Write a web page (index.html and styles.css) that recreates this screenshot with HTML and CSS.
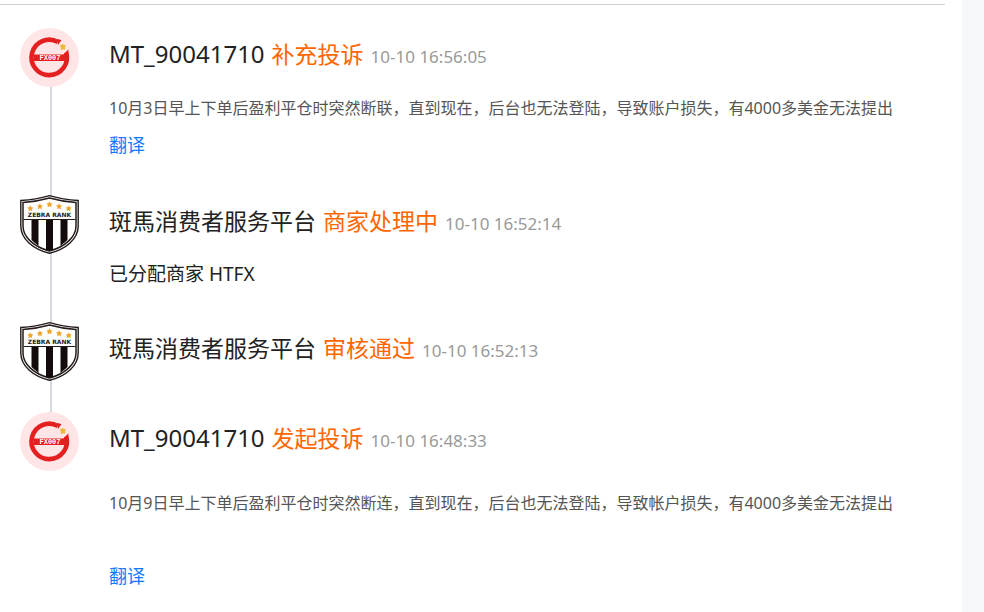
FILE: index.html
```html
<!DOCTYPE html>
<html lang="zh-CN">
<head>
<meta charset="utf-8">
<title>投诉进度</title>
<link rel="stylesheet" href="styles.css">
</head>
<body>
<main class="panel">
  <hr class="divider">
  <ol class="timeline">
    <li class="item">
      <svg class="avatar" viewBox="0 0 59 59" role="img" aria-label="FX007">
        <g id="fx">
          <circle cx="29.5" cy="29.5" r="29.5" fill="#ffe5e6"/>
          <path d="M38 14.1A17.700 17.700 0 1 0 46.200 24.500" fill="none" stroke="#e3201f" stroke-width="4.600"/>
          <path d="M38 11l3.500 1.200-3.700 5zM48.300 21.500l-5.300 5.300 5.500 1z" fill="#e3201f"/>
          <path d="M14 26.500h34v6.500H14z" fill="#e3201f"/>
          <text x="30" y="32" class="fx-text">FX007</text>
          <path d="M42.500 16l1 1.400 1.800.300-.800 1.600.3 1.800-1.700-.4-1.800.7v-1.900l-1.100-1.500 1.700-.6z" fill="#edb82f" stroke="#edb82f"/>
        </g>
      </svg>
      <div class="content">
        <div class="head"><span class="name">MT_90041710</span><span class="status">补充投诉</span><time class="time">10-10 16:56:05</time></div>
        <p class="detail">10月3日早上下单后盈利平仓时突然断联，直到现在，后台也无法登陆，导致账户损失，有4000多美金无法提出</p>
        <a class="translate" href="#">翻译</a>
      </div>
    </li>
    <li class="item">
      <svg class="avatar" viewBox="0 0 59 59" role="img" aria-label="Zebra Rank">
        <g id="zebra">
          <path d="M29.500.700C20 3.500 10 5 .800 5.500V31C.800 44 13 54 29.500 58.300 46 54 58.200 44 58.200 31V5.500C49 5 39 3.500 29.500.700z" fill="#fff" stroke="#241c1b" stroke-width="1.400"/>
          <path d="M29.500 3C20 5.700 12 6.900 3 7.500V31C3 42 14 52 29.500 56 45 52 56 42 56 31V7.500C47 6.900 39 5.700 29.500 3z" fill="#fff" stroke="#241c1b" stroke-width="1.500"/>
          <path d="M3.500 24.500h52" stroke="#241c1b"/>
          <path d="M11.500 25h7v26l-7-6zM26 25h7v30l-3.500 1-3.500-1zM40.500 25h7v20l-7 6z" fill="#140c0c"/>
          <path id="star" d="M29.500 6.200l1 2 2.200.300-1.600 1.500.400 2.200-2-1-2 1 .4-2.200-1.600-1.500 2.200-.3z" fill="#efa52c"/>
          <use href="#star" x="-9.600" y="2"/><use href="#star" x="9.600" y="2"/>
          <use href="#star" x="-19.200" y="4"/><use href="#star" x="19.200" y="4"/>
          <text x="29.500" y="22" class="zebra-text">ZEBRA RANK</text>
        </g>
      </svg>
      <div class="content">
        <div class="head"><span class="name platform">斑馬消费者服务平台</span><span class="status">商家处理中</span><time class="time">10-10 16:52:14</time></div>
        <p class="message">已分配商家 HTFX</p>
      </div>
    </li>
    <li class="item">
      <svg class="avatar" viewBox="0 0 59 59" role="img" aria-label="Zebra Rank"><use href="#zebra"/></svg>
      <div class="content">
        <div class="head"><span class="name platform">斑馬消费者服务平台</span><span class="status">审核通过</span><time class="time">10-10 16:52:13</time></div>
      </div>
    </li>
    <li class="item">
      <svg class="avatar" viewBox="0 0 59 59" role="img" aria-label="FX007"><use href="#fx"/></svg>
      <div class="content">
        <div class="head"><span class="name">MT_90041710</span><span class="status">发起投诉</span><time class="time">10-10 16:48:33</time></div>
        <p class="detail original">10月9日早上下单后盈利平仓时突然断连，直到现在，后台也无法登陆，导致帐户损失，有4000多美金无法提出</p>
        <a class="translate" href="#">翻译</a>
      </div>
    </li>
  </ol>
</main>
</body>
</html>
```
FILE: styles.css
```css
* { box-sizing: border-box; }

body {
  margin: 0;
  background: #f6f8fa;
  font-family: "Noto Sans", "Noto Sans CJK SC", sans-serif;
  color: #222;
}

.panel {
  min-height: 100vh;
  margin-right: 22px;
  padding-top: 4px;
  background: #fff;
}

.divider {
  height: 1px;
  margin: 0 17px 0 0;
  border: 0;
  background: #d2d2d2;
}

.timeline {
  margin: 0;
  padding: 23px 20px 0;
  list-style: none;
}

.item {
  position: relative;
  display: flex;
  gap: 30px;
  padding-bottom: 31px;
}

.item:last-child { padding-bottom: 0; }

.item:not(:last-child)::before {
  content: "";
  position: absolute;
  top: 30px;
  bottom: -30px;
  left: 30px;
  width: 2px;
  background: #d5d9df;
}

.avatar {
  position: relative;
  flex: none;
  width: 59px;
  height: 59px;
}

.content {
  flex: 1;
  min-width: 0;
}

.head {
  display: flex;
  align-items: baseline;
  gap: 7px;
  height: 54px;
  line-height: 52px;
}

.name { font-size: 24px; }

.platform,
.status { font-size: 23px; }

.status { color: #f60; }

.time {
  font-size: 17px;
  color: #999;
}

.detail {
  margin: 8px 0 0;
  font-size: 16px;
  line-height: 36px;
  color: #555;
}

.original { margin: 19px 0 36px; }

.message {
  margin: 8px 0 0;
  font-size: 19px;
  line-height: 34px;
}

.translate {
  display: block;
  width: fit-content;
  font-size: 18px;
  line-height: 38px;
  color: #1677ff;
  text-decoration: none;
}

.fx-text {
  fill: #fff;
  font: bold 7px "Liberation Mono", monospace;
  text-anchor: middle;
}

.zebra-text {
  fill: #241c1b;
  font: bold 6px "DejaVu Sans", sans-serif;
  text-anchor: middle;
}
```
